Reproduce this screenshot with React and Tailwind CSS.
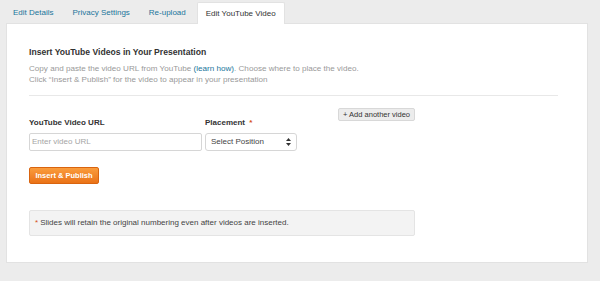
import React from "react";

const tabs = ["Edit Details", "Privacy Settings", "Re-upload"];

const SortArrows = () => (
  <svg width="5" height="8" viewBox="0 0 5 8" className="text-[#333]">
    <path d="M2.5 0 L5 3 L0 3 Z" fill="currentColor" />
    <path d="M2.5 8 L5 5 L0 5 Z" fill="currentColor" />
  </svg>
);

const App = () => {
  return (
    <div className="w-[600px] h-[281px] bg-[#ececec] overflow-hidden font-['Liberation_Sans',Arial,sans-serif]">
      <div className="flex items-end gap-[3px] pl-[5px] pt-[2px] h-[23px]">
        {tabs.map((t) => (
          <div key={t} className="px-2 h-[21px] flex items-center text-[8px] text-[#21759b]">
            {t}
          </div>
        ))}
        <div className="px-2 h-[22px] flex items-center text-[8px] text-[#333] bg-white rounded-t-[2px] border border-b-0 border-[#e2e2e2] relative top-[1px]">
          Edit YouTube Video
        </div>
      </div>

      <div className="ml-[6px] w-[582px] h-[240px] bg-white border border-[#e2e2e2] pl-[22px] pr-[29px] pt-[23px]">
        <h2 className="text-[8.6px] font-bold text-[#333] leading-[11px]">
          Insert YouTube Videos in Your Presentation
        </h2>
        <p className="mt-[5px] text-[8.1px] leading-[11px] text-[#999]">
          Copy and paste the video URL from YouTube{" "}
          <span className="text-[#21759b]">(learn how)</span>. Choose where to place the video.
          <br />
          Click “Insert &amp; Publish” for the video to appear in your presentation
        </p>
        <div className="mt-[10px] border-t border-[#e8e8e8]" />

        <div className="w-[386px] flex flex-col">
          <div className="flex justify-end mt-[12px]">
            <button className="h-[13px] px-[4px] text-[7.5px] text-[#333] bg-[#ececec] border border-[#d8d8d8] rounded-[2px] leading-none">
              + Add another video
            </button>
          </div>
          <div className="flex gap-[3px] mt-[-3px]">
            <div className="w-[173px] flex flex-col">
              <label className="text-[8px] font-bold text-[#333] leading-[10px]">YouTube Video URL</label>
              <div className="mt-[5px] h-[18px] border border-[#d6d6d6] rounded-[2px] flex items-center px-[2px] text-[8px] text-[#a5a5a5]">
                Enter video URL
              </div>
            </div>
            <div className="w-[92px] flex flex-col">
              <label className="text-[8px] font-bold text-[#333] leading-[10px]">
                Placement <span className="text-[#d54e21] ml-[2px]">*</span>
              </label>
              <div className="mt-[5px] h-[18px] border border-[#d6d6d6] rounded-[3px] flex items-center justify-between px-[5px] text-[8px] text-[#444]">
                Select Position
                <SortArrows />
              </div>
            </div>
          </div>

          <button className="mt-[16px] w-[70px] h-[17px] rounded-[2px] border border-[#d9640f] bg-gradient-to-b from-[#fa9c3c] to-[#ea7216] text-white text-[7.5px] font-bold leading-none">
            Insert &amp; Publish
          </button>

          <div className="mt-[26px] h-[26px] bg-[#f3f3f3] border border-[#e4e4e4] rounded-[2px] flex items-center px-[5px] text-[8px] text-[#444]">
            <span className="text-[#d54e21] mr-[2px]">*</span>
            Slides will retain the original numbering even after videos are inserted.
          </div>
        </div>
      </div>
    </div>
  );
};

export default App;
